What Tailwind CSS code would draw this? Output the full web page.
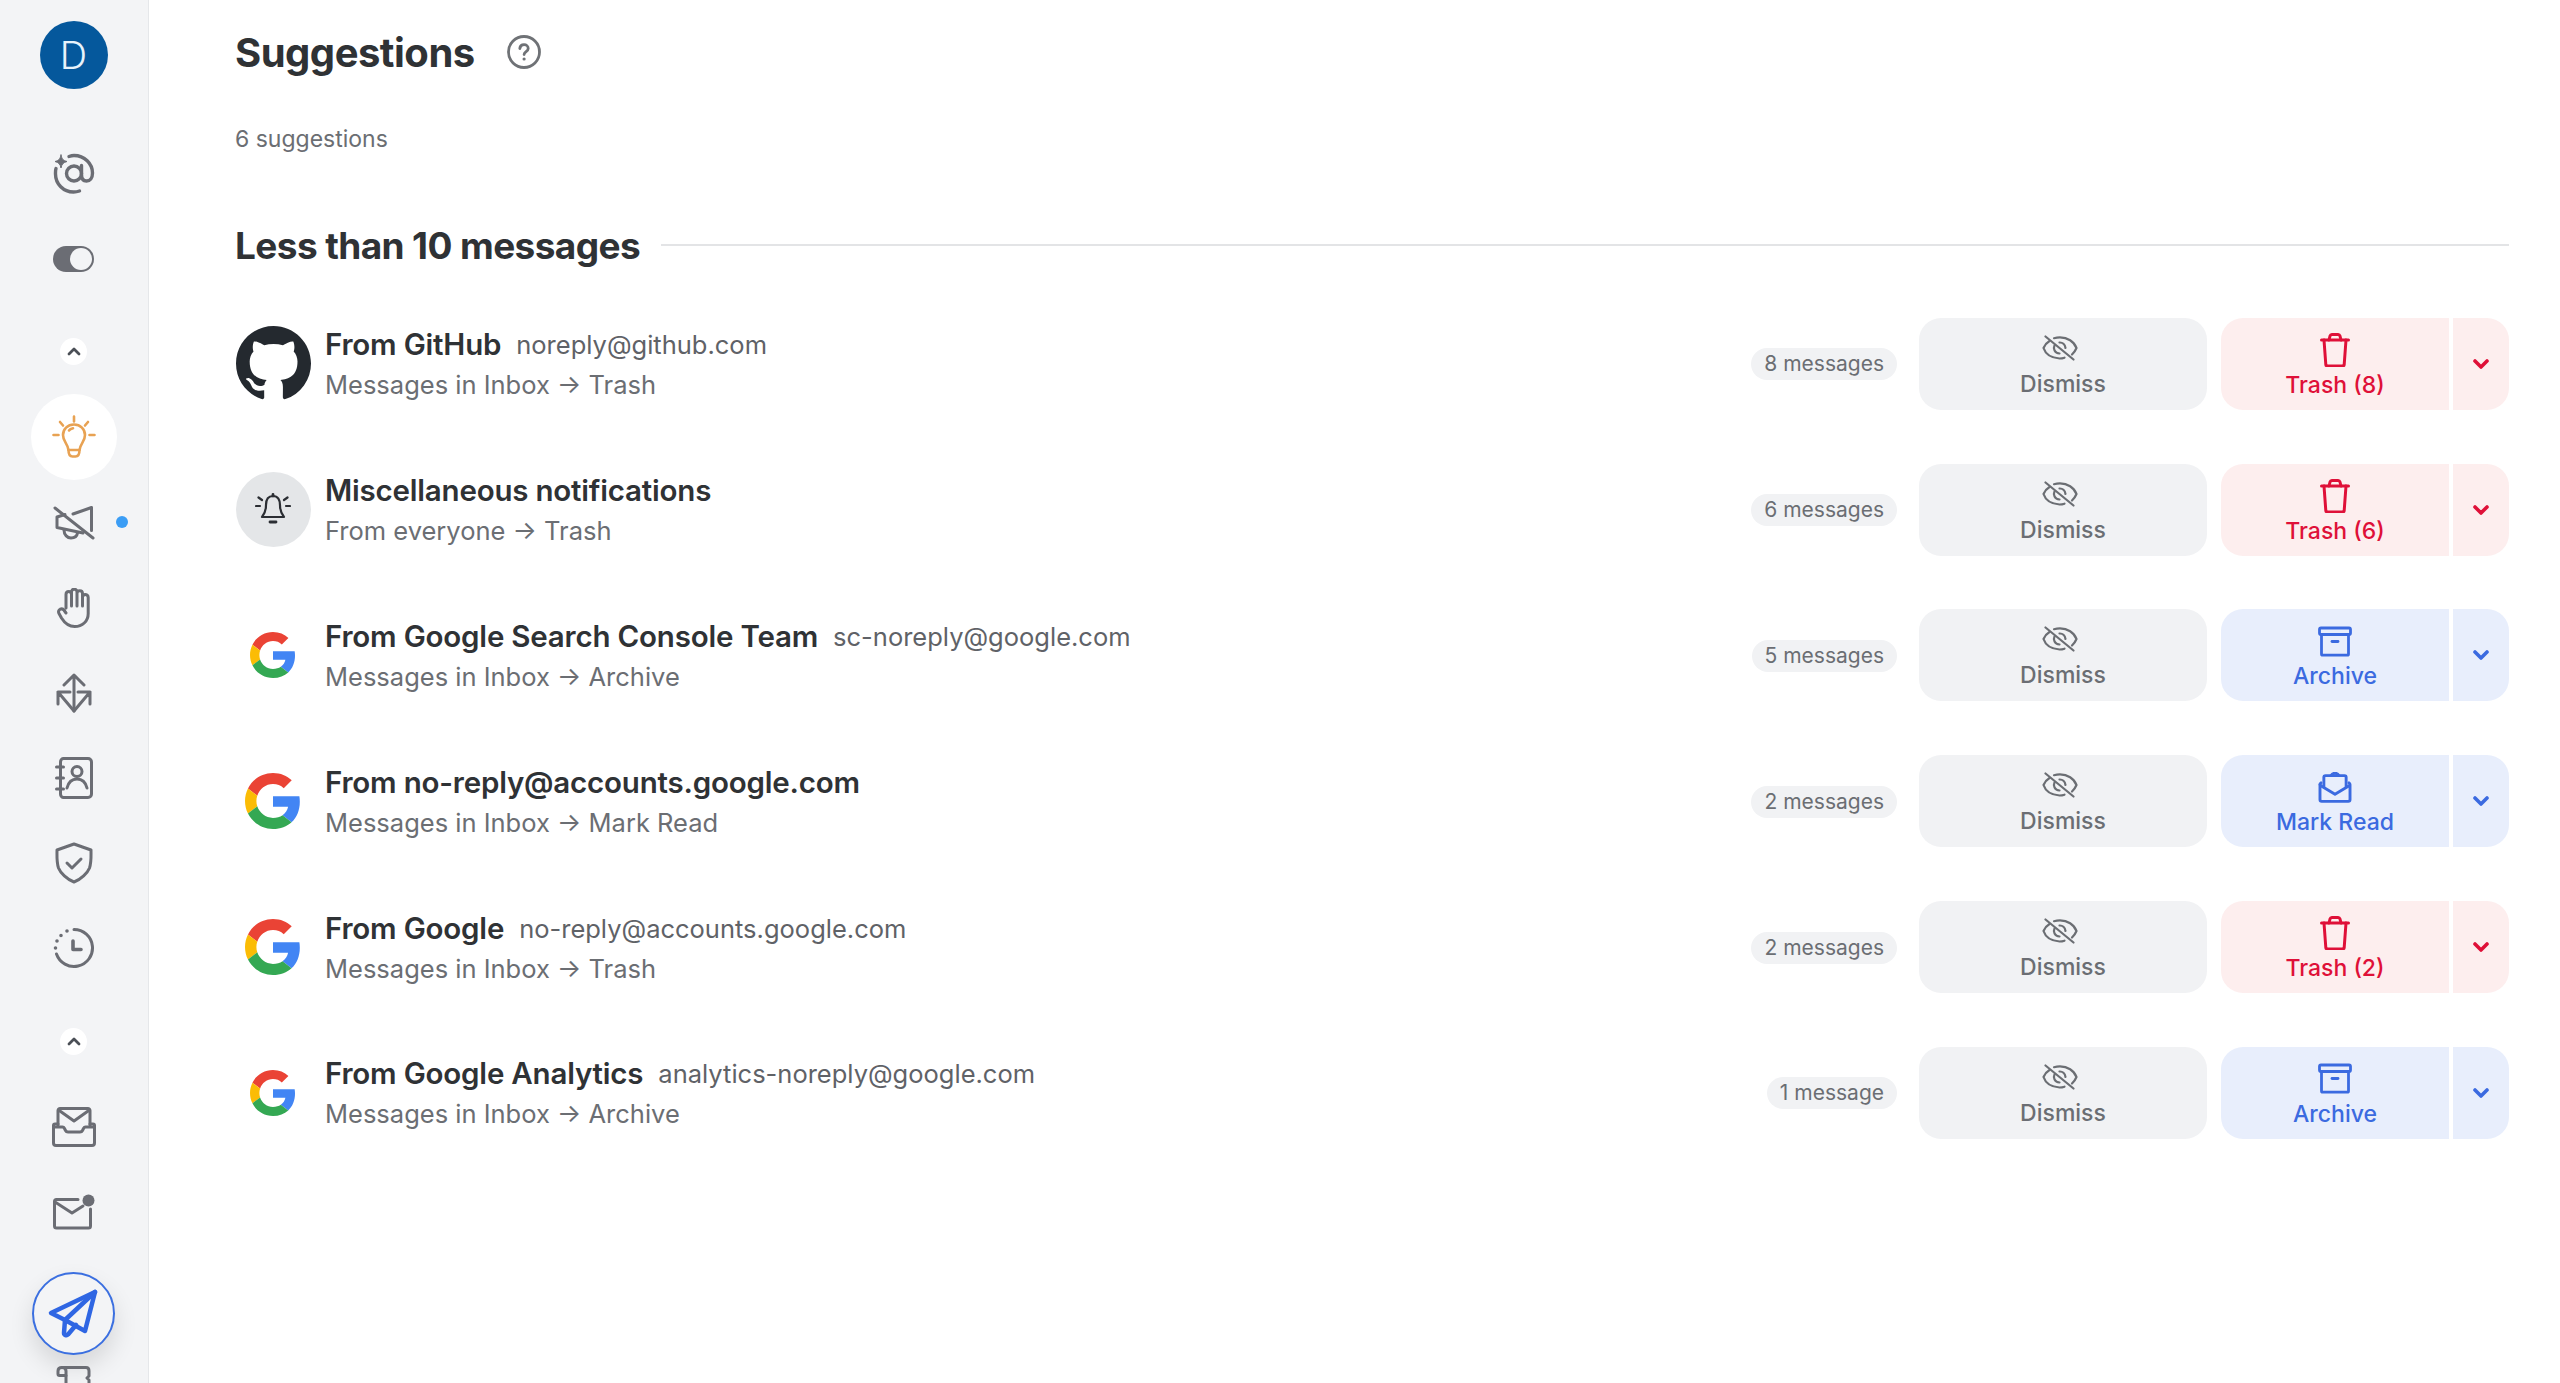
<!DOCTYPE html>
<html lang="en">
  <head>
    <meta charset="UTF-8" />
    <title>Suggestions</title>
    <script src="https://cdn.jsdelivr.net/npm/@tailwindcss/browser@4"></script>
  </head>
  <body class="h-screen overflow-hidden bg-white font-[Inter,sans-serif] text-[#2f3235]">
    <!-- shared icons -->
    <svg class="hidden">
      <symbol id="eye-off" viewBox="0 0 36 26" fill="none" stroke="currentColor" stroke-width="2.200" stroke-linecap="round" stroke-linejoin="round">
        <path d="M3.500 1.500l28 23" />
        <path d="M7.500 6C5 7.500 2.800 10 1.500 13c2 6 8 10 16 10.500 2 0 3.500-.3 5-.8" />
        <path d="M12 3.200c1.800-.5 3.800-.8 6-.8 7.500 0 14 4 16.500 10.600-1 2.500-2.500 4.500-4.500 6.500" />
        <path d="M12.500 10.500c-1.500 3 0 7.500 5 8M17.500 7.500c3-.2 5.500 2 6 5.500" />
      </symbol>
      <symbol id="trash" viewBox="0 0 30 34" fill="none" stroke="currentColor" stroke-width="3" stroke-linecap="round" stroke-linejoin="round">
        <path d="M1.500 7h27" />
        <path d="M9 7l1-4c.3-.9.8-1.500 1.800-1.500h6.400c1 0 1.500.6 1.800 1.500l1 4" />
        <path d="M4 7l1.800 24.500c.1 1 .7 1.500 1.700 1.500h15c1 0 1.600-.5 1.700-1.500L26 7" />
      </symbol>
      <symbol id="archive" viewBox="0 0 34 30" fill="none" stroke="currentColor" stroke-width="2.800" stroke-linecap="round" stroke-linejoin="round">
        <rect x="1.500" y="1.500" width="31" height="6.500" rx="1.500" />
        <path d="M3.500 8v19.500c0 .8.600 1.200 1.200 1.200h24.600c.6 0 1.200-.4 1.200-1.200V8" />
        <path d="M14 15h6" />
      </symbol>
      <symbol id="mail-open" viewBox="0 0 34 32" fill="none" stroke="currentColor" stroke-width="3" stroke-linecap="round" stroke-linejoin="round">
        <path d="M1.500 13v15.500c0 1 .8 1.800 1.800 1.800h27.400c1 0 1.800-.8 1.800-1.800V13c0-.8-.4-1.400-1-1.800" />
        <path d="M1.500 13c0-.8.4-1.400 1-1.800" />
        <path d="M5.500 15V5.500c0-1 .8-1.800 1.800-1.800h19.400c1 0 1.800.8 1.800 1.800V15" />
        <path d="M2 14l15 9 15-9" />
        <path d="M13 3.500c1-1.700 2.500-2.200 4-2.200s3 .5 4 2.200" />
      </symbol>
      <symbol id="chev" viewBox="0 0 16 10" fill="none" stroke="currentColor" stroke-width="3.600" stroke-linecap="round" stroke-linejoin="round">
        <path d="M2 2l6 6 6-6" />
      </symbol>
      <symbol id="chev-up" viewBox="0 0 14 9" fill="none" stroke="currentColor" stroke-width="2.800" stroke-linecap="round" stroke-linejoin="round">
        <path d="M2 7l5-5 5 5" />
      </symbol>
      <symbol id="google" viewBox="0 0 48 48">
        <path fill="#EA4335" d="M24 9.500c3.540 0 6.710 1.220 9.210 3.600l6.850-6.850C35.900 2.380 30.470 0 24 0 14.620 0 6.510 5.380 2.560 13.220l7.980 6.190C12.430 13.720 17.740 9.500 24 9.500z" />
        <path fill="#4285F4" d="M46.980 24.550c0-1.570-.15-3.090-.38-4.550H24v9.020h12.940c-.58 2.960-2.260 5.480-4.780 7.180l7.730 6c4.510-4.180 7.090-10.360 7.090-17.650z" />
        <path fill="#FBBC05" d="M10.530 28.590c-.48-1.450-.76-2.990-.76-4.590s.27-3.140.76-4.590l-7.980-6.190C.92 16.460 0 20.120 0 24c0 3.880.92 7.540 2.560 10.780l7.970-6.190z" />
        <path fill="#34A853" d="M24 48c6.480 0 11.930-2.130 15.890-5.810l-7.730-6c-2.150 1.450-4.920 2.300-8.160 2.300-6.260 0-11.570-4.220-13.470-9.910l-7.980 6.190C6.510 42.620 14.620 48 24 48z" />
      </symbol>
    </svg>

    <div class="flex h-full">
      <!-- Sidebar -->
      <aside class="w-[149px] shrink-0 h-full overflow-hidden bg-[#f3f4f6] border-r border-[#e5e7ea] flex flex-col items-center text-[#6b6d74] pr-px">
        <div class="mt-[21px] w-[68px] h-[68px] shrink-0 rounded-full bg-[#05589c] text-[#e8f3fb] text-[38px] font-light flex items-center justify-center">D</div>

        <div class="mt-[42px] h-[85px] shrink-0 flex items-center">
          <svg class="w-[42px] h-[42px]" viewBox="0 0 42 42" fill="none" stroke="currentColor" stroke-width="3.400" stroke-linecap="round">
            <circle cx="21" cy="20.500" r="7.500" />
            <path d="M16 3.500c2-.7 3.500-1 5-1 10.500 0 18.500 8 18.500 17.500 0 5-2.500 8-6 8s-5-3-5-6.500V12.500" />
            <path d="M3 15.500C2.300 17.500 2.500 19 2.500 21 2.500 31 10.500 39 20.500 39c2 0 4-.3 6-1" />
            <path d="M8 2c.8 4 2.200 5.500 6 6.500-3.800 1-5.200 2.500-6 6.500-.8-4-2.200-5.500-6-6.500 3.800-1 5.200-2.500 6-6.500z" fill="currentColor" stroke-width="1" />
          </svg>
        </div>

        <div class="h-[85px] shrink-0 flex items-center">
          <div class="w-[41px] h-[26px] rounded-full bg-[#6b6d74] flex items-center justify-end pr-[2px]">
            <div class="w-[22px] h-[22px] rounded-full bg-[#f3f4f6]"></div>
          </div>
        </div>

        <div class="mt-[37px] w-[27px] h-[27px] shrink-0 rounded-full bg-white flex items-center justify-center text-[#4b4f56]">
          <svg class="w-[14px] h-[9px]"><use href="#chev-up" /></svg>
        </div>

        <div class="mt-[29px] w-[86px] h-[86px] shrink-0 rounded-full bg-white flex items-center justify-center text-[#e8a253]">
          <svg class="w-[44px] h-[44px]" viewBox="0 0 44 44" fill="none" stroke="currentColor" stroke-width="2.600" stroke-linecap="round" stroke-linejoin="round">
            <path d="M22 1.500v5M8 7l3 3.500M36 7l-3 3.500M1.500 20h5M37.500 20h5" />
            <path d="M22 9.500c-6.500 0-11 4.800-11 10.500 0 6.500 4.500 8 5.500 15h11c1-7 5.500-8.500 5.500-15 0-5.700-4.500-10.500-11-10.500z" />
            <path d="M16.500 35c0 4 1.500 6.500 4 6.500h3c2.500 0 4-2.500 4-6.500M17 15.500c1-1.500 2.500-2 4-2.300" />
          </svg>
        </div>

        <div class="h-[85px] shrink-0 w-full relative flex items-center justify-center">
          <svg class="w-[42px] h-[34px]" viewBox="0 0 42 34" fill="none" stroke="currentColor" stroke-width="3" stroke-linecap="round" stroke-linejoin="round">
            <path d="M2 2l38 30" />
            <path d="M12 8.500L4 11v10.500l26 5.500" />
            <path d="M20 8l18.500-6.500v23" />
            <path d="M11 24c0 5 3.500 8 7 8s6-2 6.500-5" />
          </svg>
          <div class="absolute left-[116px] top-[36px] w-[12px] h-[12px] rounded-full bg-[#3b9df5]"></div>
        </div>

        <div class="h-[85px] shrink-0 flex items-center">
          <svg class="w-[34px] h-[40px]" viewBox="0 0 34 40" fill="none" stroke="currentColor" stroke-width="3" stroke-linecap="round" stroke-linejoin="round">
            <path d="M9 20V6.500c0-2 1.300-3 2.700-3s2.800 1 2.800 3V18M14.500 17V4c0-2 1.300-2.800 2.700-2.800S20 2 20 4v13M20 18V5.500c0-2 1.300-2.800 2.700-2.800s2.800.8 2.800 2.800V18M25.500 18V9.500c0-2 1.300-3 2.700-3s3 1 3 3v16c0 8-6 13-13.500 13C10.500 38.500 7 34 4.500 30L2 25.500c-1-1.800-.3-3.500 1.200-4.300 1.500-.7 3-.2 4 1.300L9 25" />
          </svg>
        </div>

        <div class="h-[85px] shrink-0 flex items-center">
          <svg class="w-[36px] h-[40px]" viewBox="0 0 36 40" fill="none" stroke="currentColor" stroke-width="3" stroke-linecap="round" stroke-linejoin="round">
            <path d="M18 38V2M8 12L18 2l10 10" />
            <path d="M2 19v12M2 19h12M2 19l16 19 16-19M34 19H22M34 19v12" />
          </svg>
        </div>

        <div class="h-[85px] shrink-0 flex items-center">
          <svg class="w-[38px] h-[42px]" viewBox="0 0 38 42" fill="none" stroke="currentColor" stroke-width="3" stroke-linecap="round" stroke-linejoin="round">
            <path d="M5.500 5c0-2 1.500-3.500 3-3.500H33c2 0 3.500 1.500 3.500 3.500v32c0 2-1.500 3.500-3.500 3.500H8.500c-1.500 0-3-1.500-3-3.500z" />
            <path d="M1.500 10h7M1.500 21h7M1.500 32h7" />
            <circle cx="22" cy="14.500" r="5" />
            <path d="M12 31c1.500-6 5-9 10-9s8.500 3 10 9" />
          </svg>
        </div>

        <div class="h-[85px] shrink-0 flex items-center">
          <svg class="w-[38px] h-[42px]" viewBox="0 0 38 42" fill="none" stroke="currentColor" stroke-width="3" stroke-linecap="round" stroke-linejoin="round">
            <path d="M19 2l17 6c0 6 .5 12-1.500 18-2 5-8.500 11.500-15.500 14C12 37.500 5.500 31 3.500 26 1.500 20 2 14 2 8z" />
            <path d="M12 21l5 5 9-9" />
          </svg>
        </div>

        <div class="h-[85px] shrink-0 flex items-center">
          <svg class="w-[42px] h-[42px]" viewBox="0 0 42 42" fill="none" stroke="currentColor" stroke-width="3" stroke-linecap="round" stroke-linejoin="round">
            <path d="M21 2.500A18.500 18.500 0 1 1 3.500 27" />
            <path d="M2.500 21v.01M4 14v.01M8 8.500v.01M14 4v.01" stroke-width="3.600" />
            <path d="M20 14v8.500h8" stroke-width="3.600" />
          </svg>
        </div>

        <div class="mt-[38px] w-[27px] h-[27px] shrink-0 rounded-full bg-white flex items-center justify-center text-[#4b4f56]">
          <svg class="w-[14px] h-[9px]"><use href="#chev-up" /></svg>
        </div>

        <div class="mt-[29px] h-[85px] shrink-0 flex items-center">
          <svg class="w-[44px] h-[40px]" viewBox="0 0 44 40" fill="none" stroke="currentColor" stroke-width="3" stroke-linecap="round" stroke-linejoin="round">
            <path d="M6 18V3.500C6 2.500 7 1.500 8 1.500h28c1 0 2 1 2 2V18" />
            <path d="M6.500 3l15.500 11L37.500 3" />
            <path d="M6 17H3c-1 0-1.500.5-1.500 1.500V36c0 1.500 1 2.500 2.500 2.500h36c1.500 0 2.500-1 2.500-2.500V18.500c0-1-.5-1.500-1.500-1.500h-3" />
            <path d="M1.500 20h9c1 0 1.500.5 2 1.500l1 2c.5 1 1.500 1.500 2.500 1.500h12c1 0 2-.5 2.500-1.500l1-2c.5-1 1-1.500 2-1.500h9" />
          </svg>
        </div>

        <div class="h-[85px] shrink-0 flex items-center">
          <svg class="w-[42px] h-[36px]" viewBox="0 0 42 36" fill="none" stroke="currentColor" stroke-width="3" stroke-linecap="round" stroke-linejoin="round">
            <path d="M25 5.500H3.500c-1.200 0-2 .8-2 2V32c0 1.200.8 2 2 2h32c1.200 0 2-.8 2-2V15" />
            <path d="M2 8l17 11 11-7" />
            <circle cx="35.500" cy="6.500" r="6" fill="currentColor" stroke="none" />
          </svg>
        </div>

        <div class="mt-[18px] w-[83px] h-[83px] shrink-0 rounded-full bg-[#f3f4f6] border-2 border-[#3b6fe0] shadow-[0_12px_24px_rgba(0,0,0,0.12)] flex items-center justify-center text-[#2f66e3]">
          <svg class="w-[50px] h-[50px] -translate-x-[1px]" viewBox="0 0 50 50" fill="none" stroke="currentColor" stroke-width="4.500" stroke-linecap="round" stroke-linejoin="round">
            <path d="M47 3L3 24l14 7 20 11z" />
            <path d="M47 3L17 31l-1 13c0 2 2.500 3 4 1.500L28 36" />
          </svg>
        </div>

        <div class="mt-[11px] shrink-0">
          <svg class="w-[36px] h-[40px]" viewBox="0 0 36 40" fill="none" stroke="currentColor" stroke-width="3" stroke-linecap="round" stroke-linejoin="round">
            <path d="M10 8V5c0-2-1.500-3.500-4-3.500S2 3 2 5v3c0 1 .5 1.500 1.500 1.500H10" />
            <path d="M6 1.500h24c2 0 3 1.500 3 3.500v5l-2 2 2 2v26M10 9v31" />
          </svg>
        </div>
      </aside>

      <!-- Main -->
      <main class="flex-1 min-w-0 pl-[86px] pr-[51px]">
        <div class="mt-[29px] flex items-center gap-[32px]">
          <h1 class="text-[40px] leading-[48px] font-bold tracking-[-0.5px]">Suggestions</h1>
          <svg class="w-[34px] h-[34px] text-[#6f7276] mt-[-2px]" viewBox="0 0 34 34" fill="none" stroke="currentColor" stroke-width="2.800" stroke-linecap="round">
            <circle cx="17" cy="17" r="15.500" />
            <path d="M12.800 13.500c.3-2.500 2-3.800 4.200-3.800 2.400 0 4.200 1.500 4.200 3.700 0 3.100-4.100 3.200-4.100 6.100" />
            <path d="M17.100 24v.01" stroke-width="3.200" />
          </svg>
        </div>

        <p class="mt-[48px] text-[23px] leading-[28px] text-[#6b6e73]">6 suggestions</p>

        <div class="mt-[70px] flex items-center gap-[21px]">
          <h2 class="text-[37px] leading-[46px] font-bold tracking-[-0.6px] whitespace-nowrap">Less than 10 messages</h2>
          <div class="flex-1 h-[2px] bg-[#e3e4e6] mt-[-2px]"></div>
        </div>

        <div id="rows" class="mt-[22px]"></div>
      </main>
    </div>

    <script>
      const rows = [
        { logo: "github", name: "From GitHub", email: "noreply@github.com", rule: "Messages in Inbox → Trash", count: "8 messages", action: "trash", label: "Trash (8)" },
        { logo: "bell", name: "Miscellaneous notifications", email: "", rule: "From everyone → Trash", count: "6 messages", action: "trash", label: "Trash (6)" },
        { logo: "google-sm", name: "From Google Search Console Team", email: "sc-noreply@google.com", rule: "Messages in Inbox → Archive", count: "5 messages", action: "archive", label: "Archive" },
        { logo: "google", name: "From no-reply@accounts.google.com", email: "", rule: "Messages in Inbox → Mark Read", count: "2 messages", action: "mail-open", label: "Mark Read" },
        { logo: "google", name: "From Google", email: "no-reply@accounts.google.com", rule: "Messages in Inbox → Trash", count: "2 messages", action: "trash", label: "Trash (2)" },
        { logo: "google-sm", name: "From Google Analytics", email: "analytics-noreply@google.com", rule: "Messages in Inbox → Archive", count: "1 message", action: "archive", label: "Archive" },
      ];

      function logoHtml(logo) {
        if (logo === "github") {
          return `<svg class="w-[75px] h-[75px]" viewBox="0 0 16 16" fill="#24292f"><path d="M8 0C3.580 0 0 3.580 0 8c0 3.540 2.290 6.530 5.470 7.590.4.070.55-.17.55-.38 0-.19-.01-.82-.01-1.490-2.010.37-2.530-.49-2.690-.94-.09-.23-.48-.94-.82-1.130-.28-.15-.68-.52-.01-.53.63-.01 1.080.58 1.230.82.72 1.210 1.870.87 2.330.66.07-.52.28-.87.51-1.070-1.780-.2-3.640-.89-3.640-3.950 0-.87.31-1.590.82-2.150-.08-.2-.36-1.020.08-2.120 0 0 .67-.21 2.200.82.64-.18 1.320-.27 2-.27.68 0 1.360.09 2 .27 1.530-1.040 2.200-.82 2.200-.82.44 1.100.16 1.920.08 2.120.51.56.82 1.270.82 2.150 0 3.070-1.870 3.750-3.650 3.950.29.25.54.73.54 1.480 0 1.070-.01 1.930-.01 2.200 0 .21.15.46.55.38A8.013 8.013 0 0016 8c0-4.420-3.580-8-8-8z"/></svg>`;
        }
        if (logo === "bell") {
          return `<div class="w-[75px] h-[75px] rounded-full bg-[#e4e6e8] flex items-center justify-center">
            <svg class="w-[36px] h-[34px]" viewBox="0 0 36 34" fill="none" stroke="#2b2e33" stroke-width="2.200" stroke-linecap="round" stroke-linejoin="round">
              <path d="M18 3c-5 0-7 4-7 9 0 6-1.500 9-4 12h22c-2.500-3-4-6-4-12 0-5-2-9-7-9z"/>
              <path d="M18 1.500V3M15 29h6" stroke-width="2.800"/>
              <path d="M3.500 4.500l3.500 2.500M32.500 4.500L29 7M1 13h4M31 13h4"/>
            </svg></div>`;
        }
        if (logo === "google-sm") {
          return `<svg class="w-[46px] h-[46px]"><use href="#google"/></svg>`;
        }
        return `<svg class="w-[56px] h-[56px]"><use href="#google"/></svg>`;
      }

      document.getElementById("rows").innerHTML = rows
        .map((r) => {
          const isTrash = r.action === "trash";
          const tone = isTrash ? "bg-[#fdeeee] text-[#df1038]" : "bg-[#e8eefc] text-[#3b6ae0]";
          const iconSize = r.action === "trash" ? "w-[30px] h-[34px]" : "w-[34px] h-[31px]";
          const email = r.email
            ? `<span class="ml-[15px] text-[25.500px] text-[#5f6267] whitespace-nowrap -translate-y-[1px]">${r.email}</span>`
            : "";
          return `
          <div class="h-[145.8px] flex items-center">
            <div class="w-[76px] h-[76px] shrink-0 flex items-center justify-center">${logoHtml(r.logo)}</div>
            <div class="ml-[14px] flex-1 min-w-0 pt-[2px]">
              <div class="h-[40px] flex items-baseline leading-[40px]">
                <span class="text-[29.500px] font-semibold tracking-[-0.2px] whitespace-nowrap">${r.name}</span>${email}
              </div>
              <div class="mt-[1px] h-[40px] leading-[40px] text-[25.500px] text-[#6b6e73] whitespace-nowrap">${r.rule}</div>
            </div>
            <span class="mt-[1px] h-[32px] px-[13px] rounded-full bg-[#f1f2f4] text-[21px] leading-[32px] text-[#6b6e73] whitespace-nowrap">${r.count}</span>
            <button class="ml-[22px] w-[288px] h-[92px] rounded-[22px] bg-[#f1f2f4] text-[#6b6e73] flex flex-col items-center pt-[17px]">
              <svg class="w-[36px] h-[26px] -translate-x-[3px]"><use href="#eye-off"/></svg>
              <span class="mt-[8px] text-[23px] leading-[30px] font-medium">Dismiss</span>
            </button>
            <div class="ml-[14px] flex ${tone} rounded-[22px] overflow-hidden">
              <button class="w-[228px] h-[92px] flex flex-col items-center pt-[15px]">
                <div class="h-[34px] flex items-center"><svg class="${iconSize}"><use href="#${r.action}"/></svg></div>
                <span class="mt-[3px] text-[23px] leading-[30px] font-medium">${r.label}</span>
              </button>
              <div class="w-[4px] bg-white"></div>
              <button class="w-[56px] h-[92px] flex items-center justify-center">
                <svg class="w-[16px] h-[10px]"><use href="#chev"/></svg>
              </button>
            </div>
          </div>`;
        })
        .join("");
    </script>
  </body>
</html>
